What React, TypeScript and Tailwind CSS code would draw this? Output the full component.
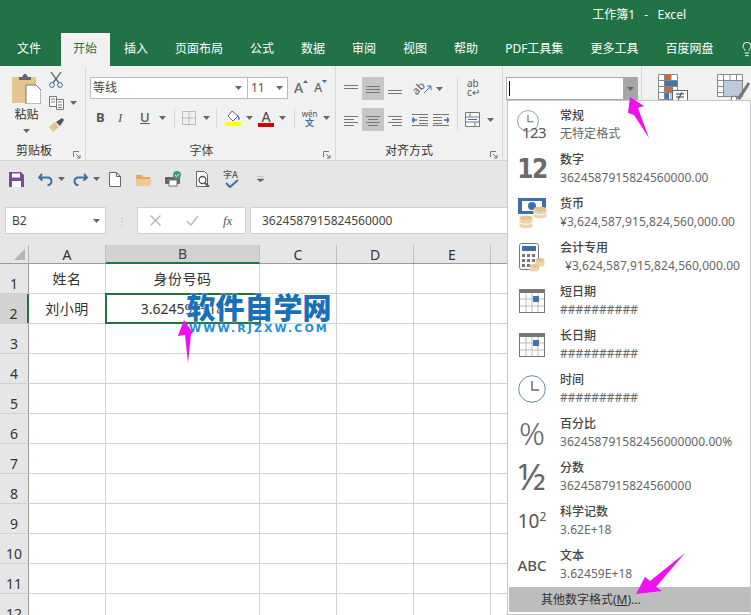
import React from 'react';
import { Lightbulb } from 'lucide-react';

const TABS = ['文件', '开始', '插入', '页面布局', '公式', '数据', '审阅', '视图', '帮助', 'PDF工具集', '更多工具', '百度网盘'];
const COLUMNS = [
  { label: 'A', width: 'w-[77px]' },
  { label: 'B', width: 'w-[154px]' },
  { label: 'C', width: 'w-[77px]' },
  { label: 'D', width: 'w-[77px]' },
  { label: 'E', width: 'w-[77px]' },
  { label: 'F', width: 'w-[77px]' },
  { label: 'G', width: 'w-[77px]' },
  { label: 'H', width: 'w-[77px]' },
];
const ROWS = [1, 2, 3, 4, 5, 6, 7, 8, 9, 10, 11, 12];

const Caret = ({ className = '' }: { className?: string }) => (
  <svg viewBox="0 0 7 4" className={`h-[4px] w-[7px] shrink-0 ${className}`}>
    <path d="M0 0h7L3.5 4z" fill="#666" />
  </svg>
);

const Launcher = () => (
  <svg viewBox="0 0 8 8" className="h-[8px] w-[8px] shrink-0">
    <path d="M.5 6V.5H6M3 3l4 4M7 4v3H4" fill="none" stroke="#777" />
  </svg>
);

// lines stacked, used by all the alignment buttons
const AlignLines = ({ d }: { d: string }) => (
  <svg viewBox="0 0 14 14" className="h-[14px] w-[14px] shrink-0">
    <path d={d} fill="none" stroke="#777" />
  </svg>
);

const Calendar = () => (
  <svg viewBox="0 0 26 24" className="h-[24px] w-[26px]">
    <rect x="0.5" y="0.5" width="25" height="23" fill="#fff" stroke="#777" />
    <rect x="0" y="0" width="26" height="4" fill="#777" />
    <path d="M7 4v19M13 4v19M19 4v19M1 10h24M1 17h24" stroke="#bbb" />
    <rect x="14" y="7" width="6" height="6" fill="#3f75ae" />
  </svg>
);

const ClockFace = ({ size }: { size: string }) => (
  <svg viewBox="0 0 28 28" className={size}>
    <circle cx="14" cy="14" r="13.3" fill="none" stroke="#5f8db0" />
    <path d="M14 6v9h7" fill="none" stroke="#666" strokeWidth="1.4" />
  </svg>
);

const Money = () => (
  <svg viewBox="0 0 29 31" className="h-[31px] w-[29px]">
    <rect x="0" y="0" width="28" height="16" fill="#3b70a8" />
    <rect x="4" y="3" width="20" height="10" fill="#fff" />
    <circle cx="14" cy="8" r="4" fill="#3b70a8" />
    <path d="M0 0h5l-5 4zM28 16h-5l5-4z" fill="#3b70a8" />
    <ellipse cx="22" cy="11" rx="6.5" ry="2.5" fill="#e5c48d" />
    <path d="M15.5 11v7c0 3 13 3 13 0v-7c0 3-13 3-13 0z" fill="#ecd3a9" />
    <path d="M15.5 14.5c0 3 13 3 13 0" fill="none" stroke="#fff" />
    <ellipse cx="8" cy="20" rx="6.5" ry="2.5" fill="#e5c48d" />
    <path d="M1.5 20v8c0 3 13 3 13 0v-8c0 3-13 3-13 0z" fill="#ecd3a9" />
    <path d="M1.5 24c0 3 13 3 13 0" fill="none" stroke="#fff" />
  </svg>
);

const Calculator = () => (
  <svg viewBox="0 0 26 29" className="h-[29px] w-[26px]">
    <rect x="0.5" y="0.5" width="19" height="26" rx="2" fill="#fff" stroke="#777" />
    <rect x="3" y="3" width="14" height="5" fill="#3b70a8" />
    <path d="M3 11h3v3H3zM8 11h3v3H8zM13 11h3v3h-3zM3 16h3v3H3zM8 16h3v3H8zM13 16h3v3h-3zM3 21h3v3H3zM8 21h3v3H8z" fill="#777" />
    <ellipse cx="21" cy="17" rx="4.5" ry="2" fill="#e5c48d" />
    <path d="M16.5 17v5c0 2 9 2 9 0v-5c0 2-9 2-9 0z" fill="#ecd3a9" />
    <ellipse cx="15" cy="23" rx="4.5" ry="2" fill="#e5c48d" />
    <path d="M10.5 23v4c0 2 9 2 9 0v-4c0 2-9 2-9 0z" fill="#ecd3a9" />
  </svg>
);

const MENU_ITEMS: { title: string; sub: string; icon: React.ReactNode; indent?: boolean }[] = [
  {
    title: '常规',
    sub: '无特定格式',
    icon: (
      <div className="relative h-[32px] w-[30px]">
        <ClockFace size="absolute left-0 top-[1px] h-[22px] w-[22px]" />
        <span className="absolute left-[5px] top-[17px] text-[15px] leading-[13px] tracking-[-0.6px] text-[#555]">123</span>
      </div>
    ),
  },
  {
    title: '数字',
    sub: '3624587915824560000.00',
    icon: <span className="font-['DejaVu_Sans_Condensed','DejaVu_Sans',sans-serif] text-[26px] leading-none font-bold tracking-[-1.5px] text-[#6b6b6b]">12</span>,
  },
  { title: '货币', sub: '¥3,624,587,915,824,560,000.00', icon: <Money /> },
  { title: '会计专用', sub: '¥3,624,587,915,824,560,000.00', icon: <Calculator />, indent: true },
  { title: '短日期', sub: '##########', icon: <Calendar /> },
  { title: '长日期', sub: '##########', icon: <Calendar /> },
  { title: '时间', sub: '##########', icon: <ClockFace size="h-[28px] w-[28px]" /> },
  {
    title: '百分比',
    sub: '362458791582456000000.00%',
    icon: <span className="text-[32px] leading-none font-light text-[#666]">%</span>,
  },
  { title: '分数', sub: '3624587915824560000', icon: <span className="text-[36px] leading-none text-[#666]">½</span> },
  {
    title: '科学记数',
    sub: '3.62E+18',
    icon: (
      <span className="text-[19px] leading-none text-[#555]">
        10<sup className="-top-[7px] text-[12px]">2</sup>
      </span>
    ),
  },
  { title: '文本', sub: '3.62459E+18', icon: <span className="text-[15px] font-medium text-[#555]">ABC</span> },
];

const NumberFormatMenu = () => (
  <div className="absolute left-[507px] top-[100px] z-20 h-[515px] w-[244px] border border-[#c6c6c6] bg-white pl-px pt-[2px]">
    {MENU_ITEMS.map((item) => (
      <div key={item.title} className="flex h-[44px] items-center">
        <div className="flex w-[46px] shrink-0 items-center justify-center">{item.icon}</div>
        <div className="ml-[5px] flex flex-col text-[12px] leading-[18px]">
          <span className="font-medium text-[#444]">{item.title}</span>
          <span className={`whitespace-nowrap tracking-[0.05px] text-[#666] ${item.indent ? 'pl-[5px]' : ''}`}>{item.sub}</span>
        </div>
      </div>
    ))}
    <div className="flex h-[25px] items-center bg-[#bdbdbd] pl-[32px] text-[12px] text-[#333]">
      其他数字格式(<span className="underline">M</span>)...
    </div>
  </div>
);

const FontGroup = () => (
  <div className="flex h-full w-[250px] shrink-0 flex-col border-r border-[#d8d8d8]">
    <div className="mt-[11px] flex h-[21px] items-center pl-[4px] pr-[2px]">
      <div className="flex h-[22px] w-[158px] items-center justify-between border border-[#bbb] bg-white pl-[2px] pr-[5px] text-[12px] text-[#444]">
        等线
        <Caret />
      </div>
      <div className="-ml-px flex h-[22px] w-[41px] items-center justify-between border border-[#bbb] bg-white pl-[3px] pr-[4px] text-[12px] text-[#555]">
        11
        <Caret />
      </div>
      <span className="ml-[6px] text-[14px] font-medium text-[#666]">A</span>
      <svg viewBox="0 0 5 3" className="mb-[12px] h-[3px] w-[5px]"><path d="M0 3h5L2.5 0z" fill="#666" /></svg>
      <span className="ml-[6px] text-[12px] font-medium text-[#666]">A</span>
      <svg viewBox="0 0 5 3" className="mb-[12px] h-[3px] w-[5px]"><path d="M0 0h5L2.5 3z" fill="#3b70a8" /></svg>
    </div>
    <div className="mt-[8px] flex h-[24px] items-center pl-[10px] text-[#555]">
      <span className="w-[22px] text-[13px] font-bold">B</span>
      <span className="w-[22px] font-['Liberation_Serif',serif] text-[13px] italic">I</span>
      <span className="w-[14px] text-[13px] font-medium underline">U</span>
      <Caret className="ml-[5px]" />
      <div className="ml-[8px] mr-[7px] h-[20px] w-px bg-[#d8d8d8]" />
      <svg viewBox="0 0 14 14" className="h-[14px] w-[14px]">
        <path d="M.5.5h13v13H.5zM7 .5v13M.5 7h13" fill="none" stroke="#888" strokeDasharray="1 1" />
      </svg>
      <Caret className="ml-[7px]" />
      <div className="ml-[6px] mr-[8px] h-[20px] w-px bg-[#d8d8d8]" />
      <svg viewBox="0 0 16 16" className="h-[16px] w-[16px]">
        <path d="M7 1l6 5-5 5-5-5z" fill="#fff" stroke="#666" />
        <path d="M13 5l2 4-2 1z" fill="#3b70a8" />
        <rect x="0" y="12" width="16" height="4" fill="#ffff00" />
      </svg>
      <Caret className="ml-[5px]" />
      <div className="ml-[5px] flex w-[16px] flex-col items-center">
        <span className="text-[14px] font-medium leading-[13px] text-[#555]">A</span>
        <div className="h-[4px] w-[16px] bg-[#d40000]" />
      </div>
      <Caret className="ml-[5px]" />
      <div className="ml-[8px] mr-[6px] h-[20px] w-px bg-[#d8d8d8]" />
      <div className="flex w-[17px] flex-col items-center leading-[9px]">
        <span className="text-[8px] text-[#555]">wén</span>
        <span className="text-[9px] font-bold text-[#3b70a8]">文</span>
      </div>
      <Caret className="ml-[5px]" />
    </div>
    <div className="relative mt-auto flex h-[18px] items-center justify-center pr-[18px] text-[12px] text-[#444]">
      字体
      <div className="absolute right-[4px] top-[9px]"><Launcher /></div>
    </div>
  </div>
);

const PasteGroup = () => (
  <div className="flex h-full w-[86px] shrink-0 flex-col border-r border-[#d8d8d8]">
    <div className="flex">
      <div className="ml-[12px] mt-[7px] flex w-[29px] flex-col items-center">
        <svg viewBox="0 0 29 31" className="h-[31px] w-[29px]">
          <rect x="0" y="4" width="24" height="26" rx="1" fill="#e5c48d" />
          <path d="M7 4h3l2-3h2l2 3h3v3H7z" fill="#666" />
          <path d="M14 12h10l5 5v14H14z" fill="#fff" stroke="#777" />
        </svg>
        <span className="mt-[2px] text-[12px] leading-[18px] text-[#333]">粘贴</span>
        <Caret className="mt-[5px]" />
      </div>
      <div className="ml-[8px] flex flex-col pt-[6px]">
        <svg viewBox="0 0 14 16" className="h-[16px] w-[14px]">
          <path d="M2 0l8 11M12 0L4 11" stroke="#666" strokeWidth="1.3" />
          <circle cx="3" cy="13" r="2.4" fill="none" stroke="#3b70a8" />
          <circle cx="11" cy="13" r="2.4" fill="none" stroke="#3b70a8" />
        </svg>
        <div className="mt-[8px] flex items-center">
          <svg viewBox="0 0 15 14" className="h-[14px] w-[15px]">
            <path d="M.5.5h7v10h-7zM7.5 3.5h7v10h-7zM2 3h4M2 6h4M9 6h4M9 9h4M9 11.500h4" fill="#fff" stroke="#777" />
          </svg>
          <Caret className="ml-[6px]" />
        </div>
        <svg viewBox="0 0 15 15" className="mt-[8px] h-[15px] w-[15px]">
          <path d="M0 9l6-5 4 5-6 5z" fill="#e5c48d" />
          <path d="M7 4l6-4 2 2-4 6z" fill="#555" />
        </svg>
      </div>
    </div>
    <div className="relative mt-auto flex h-[18px] items-center pl-[16px] text-[12px] text-[#333]">
      剪贴板
      <div className="absolute right-[4px] top-[9px]"><Launcher /></div>
    </div>
  </div>
);

const AlignGroup = () => (
  <div className="flex h-full w-[167px] shrink-0 flex-col border-r border-[#d8d8d8]">
    <div className="flex pl-[8px] pt-[11px]">
      <div className="grid grid-cols-[14px_22px_14px] grid-rows-[23px_23px] items-center justify-items-center gap-x-[4px] gap-y-[8px]">
        <AlignLines d="M0 3.500h14M0 6.500h14" />
        <div className="flex h-[23px] w-[22px] items-center justify-center bg-[#c6c6c6]"><AlignLines d="M0 4.500h14M0 7.500h14M0 10.500h14" /></div>
        <AlignLines d="M0 8.500h14M0 11.500h14" />
        <AlignLines d="M0 3.500h14M0 6.500h10M0 9.500h14M0 12.500h10" />
        <div className="flex h-[23px] w-[22px] items-center justify-center bg-[#c6c6c6]"><AlignLines d="M0 3.500h14M2 6.500h10M0 9.500h14M2 12.500h10" /></div>
        <AlignLines d="M0 3.500h14M4 6.500h10M0 9.500h14M4 12.500h10" />
      </div>
      <div className="ml-[10px] flex w-[38px] flex-col">
        <div className="flex h-[23px] items-center">
          <span className="-rotate-45 text-[11px] text-[#555]">ab</span>
          <svg viewBox="0 0 8 8" className="-ml-[1px] h-[8px] w-[8px]"><path d="M0 8l7-7M3 1h4v4" fill="none" stroke="#3b70a8" /></svg>
          <Caret className="ml-[4px]" />
        </div>
        <div className="mt-[8px] flex h-[23px] items-center gap-[5px]">
          <svg viewBox="0 0 16 14" className="h-[14px] w-[16px]"><path d="M0 1.500h16M7 4.500h9M7 7.500h9M7 10.500h9M0 12.500h16" stroke="#777" /><path d="M0 7h5M2 4.500L0 7l2 2.500" fill="none" stroke="#3b70a8" strokeWidth="1.300" /></svg>
          <svg viewBox="0 0 16 14" className="h-[14px] w-[16px]"><path d="M0 1.500h16M0 4.500h9M0 7.500h9M0 10.500h9M0 12.500h16" stroke="#777" /><path d="M11 7h5M14 4.500L16 7l-2 2.500" fill="none" stroke="#3b70a8" strokeWidth="1.300" /></svg>
        </div>
      </div>
      <div className="ml-[7px] mr-[7px] h-[54px] w-px bg-[#d8d8d8]" />
      <div className="flex w-[34px] flex-col">
        <div className="flex h-[23px] flex-col pl-[2px] pt-[2px] text-[10px] leading-[9px] text-[#555]">
          <span>ab</span>
          <span>c↵</span>
        </div>
        <div className="mt-[8px] flex h-[23px] items-center">
          <svg viewBox="0 0 15 15" className="h-[15px] w-[15px]"><path d="M.5.5h14v14H.5zM.5 5h14M.5 10h14M5 .5V5M10 10v4.500" fill="#fff" stroke="#777" /><path d="M3 7.500h9" stroke="#3b70a8" /></svg>
          <Caret className="ml-[7px]" />
        </div>
      </div>
    </div>
    <div className="relative mt-auto flex h-[18px] items-center justify-center pr-[20px] text-[12px] text-[#333]">
      对齐方式
      <div className="absolute right-[4px] top-[9px]"><Launcher /></div>
    </div>
  </div>
);

const ConditionalFormat = () => (
  <svg viewBox="0 0 30 27" className="h-[27px] w-[30px] shrink-0">
    <path d="M.5.5h19v25H.5zM.5 6.500h19M.5 12.500h19M.5 18.500h19M6.500.5v25M13 .5v25" fill="#fff" stroke="#888" />
    <rect x="7" y="1" width="6" height="5" fill="#d2673c" />
    <rect x="7" y="7" width="12" height="5" fill="#3b78b8" />
    <rect x="7" y="13" width="8" height="5" fill="#d2673c" />
    <rect x="7" y="19" width="4" height="6" fill="#3b78b8" />
    <rect x="14.500" y="16.500" width="15" height="10" fill="#fff" stroke="#666" />
    <path d="M18 20h8M18 23h8M24 18l-4 8" stroke="#333" />
  </svg>
);

const TableFormat = () => (
  <svg viewBox="0 0 33 27" className="h-[27px] w-[33px] shrink-0">
    <path d="M.5.5h25v22H.5zM.5 6.500h25M.5 12.500h25M.5 18.500h25M6.500.5v22M13 .5v22M19.500.5v22" fill="#fff" stroke="#888" />
    <rect x="7" y="7" width="18" height="15" fill="#bccbdb" />
    <path d="M20 24L31 8l2 2-10 16z" fill="#777" />
    <circle cx="17" cy="25" r="3" fill="#fff" stroke="#3b70a8" />
  </svg>
);

const Ribbon = () => (
  <div className="flex h-[95px] items-stretch border-b border-[#d2d2d2] bg-[#f1f1f1]">
    <PasteGroup />
    <FontGroup />
    <AlignGroup />
    <div className="h-full w-[139px] shrink-0 border-r border-[#d8d8d8] pl-[3px] pt-[11px]">
      <div className="flex h-[23px] w-[132px] items-center justify-between border border-[#a8a8a8] bg-white pl-[2px]">
        <div className="h-[15px] w-px bg-black" />
        <div className="flex h-full w-[14px] items-center justify-center bg-[#a6a6a6]"><Caret /></div>
      </div>
    </div>
    <div className="flex gap-[29px] pl-[16px] pt-[8px]">
      <ConditionalFormat />
      <TableFormat />
    </div>
  </div>
);

const QuickAccess = () => (
  <div className="flex h-[46px] items-center bg-[#e6e6e6] pb-[10px] pl-[9px]">
    <svg viewBox="0 0 15 15" className="h-[15px] w-[15px]">
      <path d="M0 0h12l3 3v12H0z" fill="#7a4a9d" />
      <rect x="3" y="1.500" width="8" height="4" fill="#fff" />
      <rect x="3" y="9" width="9" height="6" fill="#fff" />
    </svg>
    <svg viewBox="0 0 15 13" className="ml-[14px] h-[13px] w-[15px]">
      <path d="M4 1L1 4.500l3.500 3M1.500 4.500h8c5 0 5.500 7 0 8" fill="none" stroke="#3b70a8" strokeWidth="2" />
    </svg>
    <Caret className="ml-[5px]" />
    <svg viewBox="0 0 15 13" className="ml-[8px] h-[13px] w-[15px]">
      <path d="M11 1l3 3.500-3.500 3M13.500 4.500h-8c-5 0-5.500 7 0 8" fill="none" stroke="#3b70a8" strokeWidth="2" />
    </svg>
    <Caret className="ml-[5px]" />
    <svg viewBox="0 0 12 15" className="ml-[9px] h-[15px] w-[12px]">
      <path d="M.5.5h7l4 4v10H.5zM7.500.5v4h4" fill="#fff" stroke="#666" />
    </svg>
    <svg viewBox="0 0 16 13" className="ml-[15px] h-[13px] w-[16px]">
      <path d="M0 2h6l1 2h7v3H0z" fill="#e0a868" />
      <path d="M0 6h16l-2 7H0z" fill="#efc98f" />
    </svg>
    <svg viewBox="0 0 17 16" className="ml-[13px] h-[16px] w-[17px]">
      <rect x="0" y="6" width="15" height="7" rx="1" fill="#666" />
      <rect x="4" y="9" width="8" height="6" fill="#fff" stroke="#777" />
      <circle cx="12" cy="4" r="4" fill="#3f9c7c" />
      <path d="M10 4l1.500 1.500L14 3" fill="none" stroke="#fff" />
    </svg>
    <svg viewBox="0 0 16 16" className="ml-[13px] h-[16px] w-[16px]">
      <path d="M1.500.5h8l3 3v12h-11z" fill="#fff" stroke="#666" />
      <circle cx="7.500" cy="9" r="3.500" fill="none" stroke="#555" strokeWidth="1.300" />
      <path d="M10 12l4 4" stroke="#555" strokeWidth="2" />
    </svg>
    <div className="relative ml-[12px] h-[18px] w-[17px]">
      <span className="absolute left-0 top-0 text-[9px] font-medium leading-[10px] text-[#555]">字A</span>
      <svg viewBox="0 0 14 9" className="absolute bottom-0 left-[2px] h-[9px] w-[14px]">
        <path d="M1 4l4 4 8-7" fill="none" stroke="#3b70a8" strokeWidth="2" />
      </svg>
    </div>
    <svg viewBox="0 0 7 6" className="ml-[17px] h-[6px] w-[7px]">
      <path d="M0 0h7M0 3h7L3.500 6z" fill="#666" stroke="#666" strokeWidth=".5" />
    </svg>
  </div>
);

const FormulaBar = () => (
  <div className="flex h-[38px] items-start bg-[#e6e6e6] pl-[5px]">
    <div className="flex h-[27px] w-[101px] items-center justify-between border border-[#d0d0d0] bg-white pl-[6px] pr-[5px] text-[12px] text-[#444]">
      B2
      <Caret />
    </div>
    <div className="flex h-[27px] w-[31px] items-center justify-center text-[10px] leading-none text-[#aaa]">⋮</div>
    <div className="flex h-[27px] w-[109px] items-center border border-[#d0d0d0] bg-white pl-[12px]">
      <svg viewBox="0 0 11 11" className="h-[11px] w-[11px]"><path d="M.5.5l10 10M10.500.5l-10 10" stroke="#bbb" strokeWidth="1.500" /></svg>
      <svg viewBox="0 0 13 11" className="ml-[25px] h-[11px] w-[13px]"><path d="M1 6l4 4 7-9" fill="none" stroke="#bbb" strokeWidth="1.500" /></svg>
      <span className="ml-[24px] font-['Liberation_Serif',serif] text-[13px] italic text-[#555]">fx</span>
    </div>
    <div className="ml-[4px] flex h-[27px] w-[260px] items-center border border-[#d0d0d0] bg-white pl-[11px] text-[12px] text-[#444]">
      3624587915824560000
    </div>
  </div>
);

const Sheet = () => (
  <div className="relative flex-1 overflow-hidden bg-white text-[#333]">
    <div className="flex h-[19px] border-b border-[#9a9a9a] bg-[#e6e6e6]">
      <div className="relative w-[29px] shrink-0 border-r border-[#b5b5b5]">
        <svg viewBox="0 0 11 11" className="absolute bottom-[3px] right-[3px] h-[11px] w-[11px]"><path d="M11 0v11H0z" fill="#b5b5b5" /></svg>
      </div>
      {COLUMNS.map((col) => (
        <div
          key={col.label}
          className={`${col.width} flex shrink-0 items-end justify-center border-r border-[#c0c0c0] text-[14px] leading-[16px] ${
            col.label === 'B' ? 'h-[19px] border-b-2 border-b-[#217346] bg-[#d2d2d2] text-[#444]' : ''
          }`}
        >
          {col.label}
        </div>
      ))}
    </div>
    {ROWS.map((row) => (
      <div key={row} className="flex h-[30px] border-b border-[#d0d0d0]">
        <div
          className={`flex w-[29px] shrink-0 items-end justify-center border-r border-[#9a9a9a] text-[14px] leading-[18px] ${
            row === 2 ? 'border-r-2 border-r-[#217346] bg-[#d2d2d2]' : 'bg-[#e6e6e6]'
          }`}
        >
          {row}
        </div>
        {COLUMNS.map((col) => (
          <div
            key={col.label}
            className={`${col.width} flex shrink-0 items-center justify-center border-r border-[#d0d0d0] text-[14px] tracking-[0.5px] ${
              row === 2 && col.label === 'B' ? 'relative outline-2 -outline-offset-1 outline-[#217346]' : ''
            }`}
          >
            {row === 1 && col.label === 'A' && '姓名'}
            {row === 1 && col.label === 'B' && '身份号码'}
            {row === 2 && col.label === 'A' && '刘小明'}
            {row === 2 && col.label === 'B' && <span className="tracking-normal">3.62459E+18</span>}
          </div>
        ))}
      </div>
    ))}
  </div>
);

const App: React.FC = () => {
  return (
    <div className="relative flex h-[615px] w-[751px] flex-col overflow-hidden bg-white font-['Noto_Sans','Noto_Sans_CJK_SC',sans-serif]">
      {/* Title bar */}
      <div className="flex h-[33px] items-center justify-end bg-[#217346] pb-[4px] pr-[65px] text-[12px] text-white">
        工作簿1&nbsp;&nbsp;&nbsp;-&nbsp;&nbsp;&nbsp;Excel
      </div>

      {/* Tabs */}
      <div className="relative flex h-[33px] items-stretch gap-[1px] bg-[#217346] text-[12px] text-white">
        {TABS.map((tab) => (
          <div
            key={tab}
            className={`flex items-center justify-center pb-[1px] ${
              tab === '开始' ? 'bg-[#f1f1f1] pl-[12px] pr-[13px] text-[#217346]' : tab === '文件' ? 'w-[60px] pl-[17px] pr-[19px]' : 'px-[13px]'
            }`}
          >
            {tab}
          </div>
        ))}
        <Lightbulb className="absolute left-[739px] top-[8px] h-[16px] w-[16px] text-white" strokeWidth={1.5} />
      </div>

      <Ribbon />
      <QuickAccess />
      <FormulaBar />
      <Sheet />

      <NumberFormatMenu />

      {/* Watermark */}
      <div className="absolute left-[186px] top-[289px] z-10 flex w-[146px] flex-col items-center">
        <span className="whitespace-nowrap font-['Noto_Sans_CJK_SC',sans-serif] text-[29px] font-black leading-[35px] text-[#1a6fb9] [text-shadow:0_0_2px_#fff]">
          软件自学网
        </span>
        <span className="-mt-[1px] whitespace-nowrap font-['DejaVu_Sans',sans-serif] text-[11px] font-bold leading-[11px] tracking-[2.1px] text-[#1e90d8] [text-shadow:0_0_1px_#fff]">
          WWW.RJZXW.COM
        </span>
      </div>

      {/* Magenta arrows drawn over the screenshot */}
      <svg viewBox="0 0 751 615" className="pointer-events-none absolute left-0 top-0 z-30 h-[615px] w-[751px]">
        <path d="M630 97l14 9-6 2 11 30-15-23-6-2z" fill="#ee10ee" />
        <path d="M184 320l9 13-2 1-3 29-3-28-7 1z" fill="#ee10ee" />
        <path d="M636 594l9-17 5 4 35-28-29 34 6 4z" fill="#ee10ee" />
      </svg>
    </div>
  );
};

export default App;
